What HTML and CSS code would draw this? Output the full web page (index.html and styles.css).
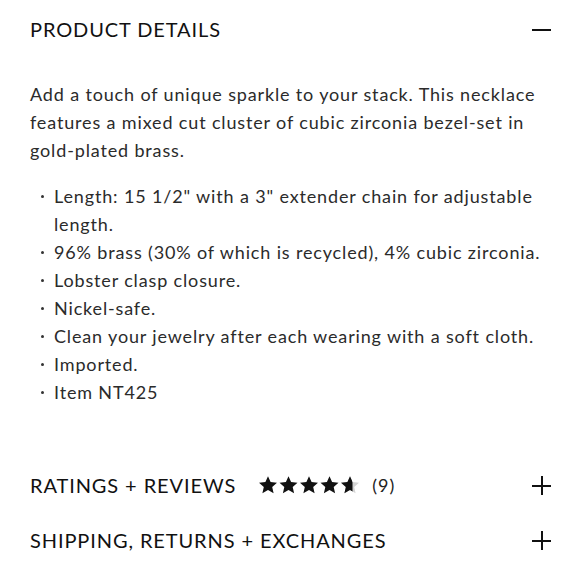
FILE: index.html
```html
<!DOCTYPE html>
<html lang="en">
<head>
<meta charset="utf-8">
<link rel="stylesheet" href="styles.css">
</head>
<body>
<section class="acc acc-open">
  <div class="acc-head">
    <h2 class="acc-title">PRODUCT DETAILS</h2>
    <span class="icon-minus"></span>
  </div>
  <div class="acc-body">
    <p class="desc">Add a touch of unique sparkle to your stack. This necklace features a mixed cut cluster of cubic zirconia bezel-set in gold-plated brass.</p>
    <ul class="list">
      <li>Length: 15 1/2" with a 3" extender chain for adjustable length.</li>
      <li>96% brass (30% of which is recycled), 4% cubic zirconia.</li>
      <li>Lobster clasp closure.</li>
      <li>Nickel-safe.</li>
      <li>Clean your jewelry after each wearing with a soft cloth.</li>
      <li>Imported.</li>
      <li>Item NT425</li>
    </ul>
  </div>
</section>
<section class="acc acc-ratings">
  <div class="acc-head">
    <h2 class="acc-title">RATINGS + REVIEWS</h2>
    <div class="stars">
      <svg width="102" height="20" viewBox="0 0 102 20">
        <defs>
          <path id="st" d="M10 1.2l2.6 5.9 6.4.6-4.8 4.3 1.4 6.3L10 15l-5.6 3.3 1.4-6.3L1 7.7l6.4-.6z"/>
          <clipPath id="half"><rect x="0" y="0" width="12.5" height="20"/></clipPath>
        </defs>
        <use href="#st" x="0" fill="#111"/>
        <use href="#st" x="20.5" fill="#111"/>
        <use href="#st" x="41" fill="#111"/>
        <use href="#st" x="61.5" fill="#111"/>
        <g transform="translate(82 0)">
          <use href="#st" fill="#d4d4d4"/>
          <use href="#st" fill="#111" clip-path="url(#half)"/>
        </g>
      </svg>
      <span class="count">(9)</span>
    </div>
    <span class="icon-plus"></span>
  </div>
</section>
<section class="acc">
  <div class="acc-head">
    <h2 class="acc-title">SHIPPING, RETURNS + EXCHANGES</h2>
    <span class="icon-plus"></span>
  </div>
</section>
</body>
</html>
```
FILE: styles.css
```css
html, body {
  margin: 0;
  padding: 0;
  background: #fff;
}
body {
  padding: 0 29px 0 30px;
  font-family: "Lato", "Liberation Sans", sans-serif;
  color: #2b2b2b;
}
.acc-head {
  display: flex;
  align-items: center;
  height: 56px;
}
.acc-open .acc-head {
  height: 58px;
}
.acc-title {
  margin: 0;
  font-weight: 400;
  font-size: 20px;
  letter-spacing: 0.9px;
  color: #111;
  flex: 0 0 auto;
}
.stars {
  display: flex;
  align-items: center;
  margin-left: 22px;
  flex: 1;
}
.stars svg {
  display: block;
}
.count {
  margin-left: 12px;
  font-size: 18px;
  letter-spacing: 1px;
  color: #222;
}
.icon-minus, .icon-plus {
  margin-left: auto;
  width: 19px;
  height: 19px;
  position: relative;
  flex: 0 0 auto;
}
.icon-minus::before, .icon-plus::before, .icon-plus::after {
  content: "";
  position: absolute;
  background: #111;
}
.icon-minus::before, .icon-plus::before {
  left: 0;
  right: 0;
  top: 9px;
  height: 2px;
}
.icon-plus::after {
  top: 0;
  bottom: 0;
  left: 9px;
  width: 2px;
}
.acc-body {
  padding-top: 22px;
  padding-bottom: 52px;
  font-size: 18px;
  line-height: 28px;
  letter-spacing: 0.85px;
}
.desc {
  margin: 0 0 18px;
}
.list {
  margin: 0;
  padding: 0;
  list-style: none;
}
.list li {
  position: relative;
  padding-left: 24px;
}
.list li::before {
  content: "";
  position: absolute;
  left: 11px;
  top: 13px;
  width: 3px;
  height: 3px;
  border-radius: 50%;
  background: #333;
}
.acc-ratings .acc-head {
  height: 54px;
}
```
